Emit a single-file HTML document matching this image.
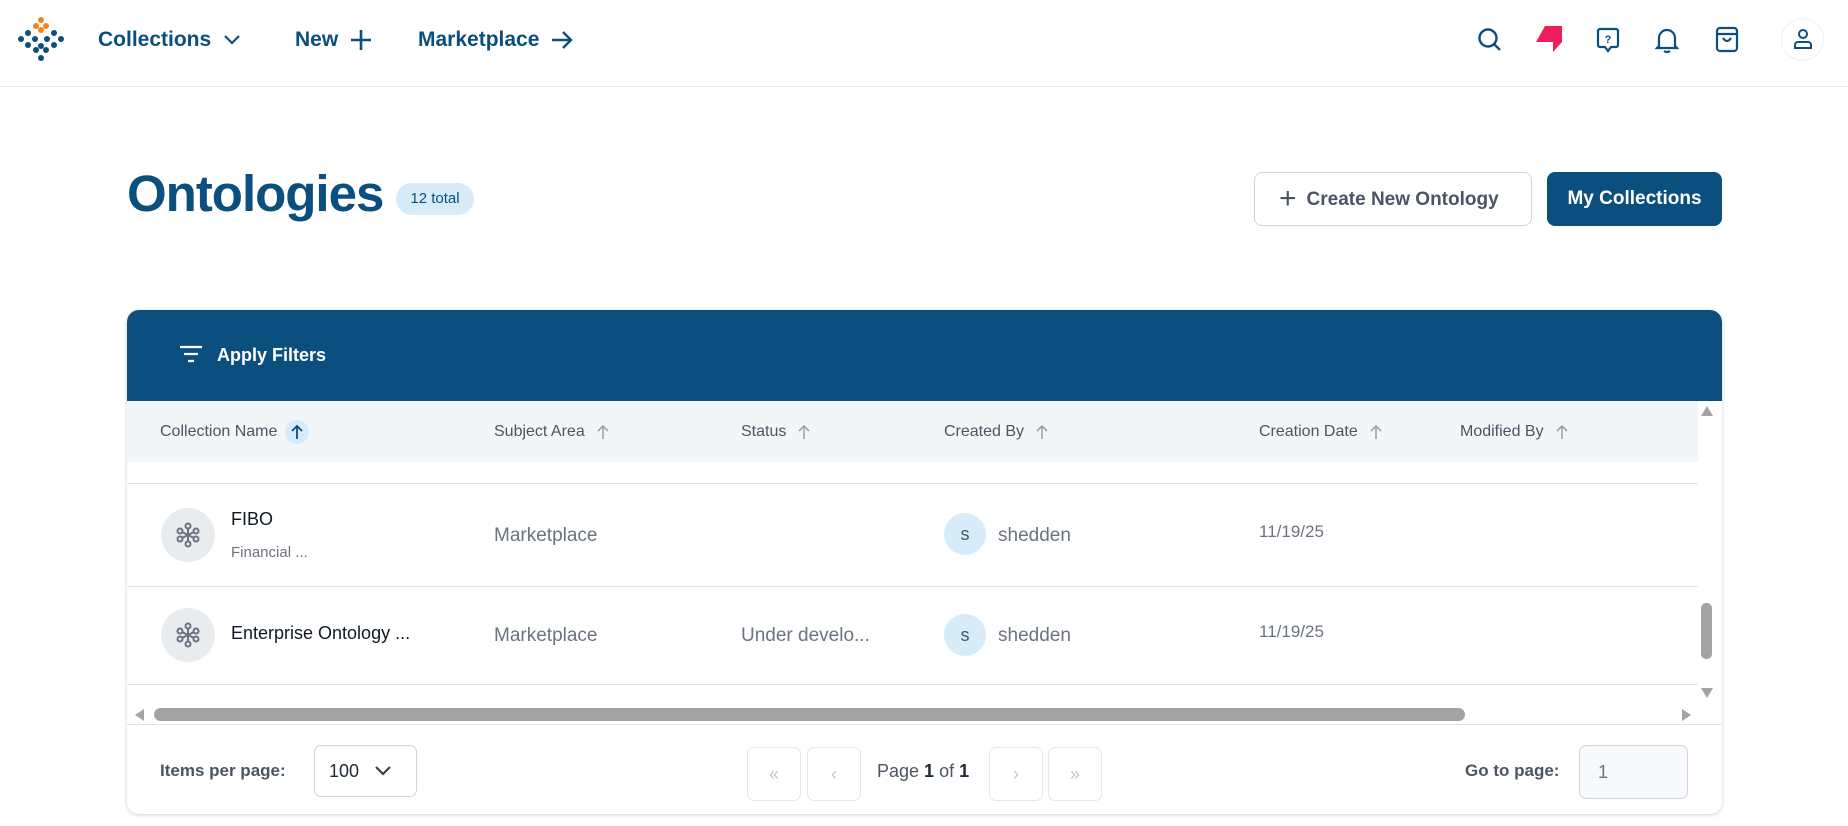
<!DOCTYPE html>
<html><head><meta charset="utf-8"><style>
*{box-sizing:border-box;margin:0;padding:0}
body{width:1848px;height:826px;background:#fff;font-family:"Liberation Sans",sans-serif;position:relative;overflow:hidden;color:#1f2937}
.a{position:absolute}
.nav{font-size:21px;font-weight:bold;color:#0b4f7e;top:28px;display:flex;align-items:center}
.nav svg{margin-left:12px}
.hd{top:0;left:0;width:1848px;height:87px;border-bottom:1px solid #e5e7eb}
.col{font-size:16px;color:#4b5563;top:423px;display:flex;align-items:center}
.col svg{margin-left:12px}
.cell{font-size:19px;color:#6b7280}
.pb{width:54px;height:54px;border:1px solid #e5e7eb;border-radius:7px;top:747px;color:#c0c6cf;font-size:18px;text-align:center;line-height:52px}
</style></head><body>
<div class="a hd"></div>
<svg class="a" style="left:18px;top:16px" width="46" height="46" viewBox="0 0 46 46">
<g fill="#f58220"><circle cx="23" cy="4" r="3"/><circle cx="18" cy="10" r="3"/><circle cx="28" cy="10" r="3"/><circle cx="23" cy="14" r="3"/></g>
<g fill="#0b4f7e"><circle cx="3" cy="23" r="3"/><circle cx="43" cy="23" r="3"/><circle cx="10" cy="17" r="3"/><circle cx="36" cy="17" r="3"/><circle cx="10" cy="29" r="3"/><circle cx="36" cy="29" r="3"/><circle cx="17" cy="23" r="3"/><circle cx="29" cy="23" r="3"/><circle cx="18" cy="34" r="3"/><circle cx="28" cy="34" r="3"/><circle cx="23" cy="30" r="3"/><circle cx="23" cy="42" r="3"/></g></svg>
<div class="a nav" style="left:98px">Collections<svg width="18" height="12" viewBox="0 0 18 12" fill="none" stroke="#0b4f7e" stroke-width="2.2"><path d="M2 2l7 7 7-7"/></svg></div>
<div class="a nav" style="left:295px">New<svg width="22" height="22" viewBox="0 0 22 22" stroke="#0b4f7e" stroke-width="2.6"><path d="M11 1v20M1 11h20"/></svg></div>
<div class="a nav" style="left:418px">Marketplace<svg width="22" height="20" viewBox="0 0 22 20" fill="none" stroke="#0b4f7e" stroke-width="2.4"><path d="M1 10h19M12 2l8 8-8 8"/></svg></div>
<svg class="a" style="left:1477px;top:27px" width="26" height="26" viewBox="0 0 26 26" fill="none" stroke="#0b4f7e" stroke-width="2.4"><circle cx="11" cy="11" r="8.5"/><path d="M17 17l6 6"/></svg>
<svg class="a" style="left:1535px;top:25px" width="30" height="30" viewBox="0 0 30 30"><path d="M10 1h17v16l-9 10v-10H1z" fill="#ee1e5a"/></svg>
<svg class="a" style="left:1596px;top:27px" width="24" height="26" viewBox="0 0 24 26" fill="none" stroke="#0b4f7e" stroke-width="2.2"><path d="M4 2h16a2 2 0 012 2v14a2 2 0 01-2 2h-5l-3 4-3-4H4a2 2 0 01-2-2V4a2 2 0 012-2z"/><text x="12" y="16" font-size="11" font-weight="bold" text-anchor="middle" fill="#0b4f7e" stroke="none" font-family="Liberation Sans">?</text></svg>
<svg class="a" style="left:1655px;top:27px" width="24" height="27" viewBox="0 0 24 27" fill="none" stroke="#0b4f7e" stroke-width="2.2"><path d="M4 19V11a8 8 0 0116 0v8l2 2H2z"/><path d="M9 24q3 2 6 0"/></svg>
<svg class="a" style="left:1715px;top:26px" width="24" height="27" viewBox="0 0 24 27" fill="none" stroke="#0b4f7e" stroke-width="2.2"><rect x="2" y="2" width="20" height="23" rx="3"/><path d="M2 8h20M8 12q4 6 8 0"/></svg>
<div class="a" style="left:1781px;top:18px;width:43px;height:43px;border:1px solid #eef0f2;border-radius:50%"></div>
<svg class="a" style="left:1792px;top:28px" width="22" height="22" viewBox="0 0 22 22" fill="none" stroke="#0b4f7e" stroke-width="2"><circle cx="11" cy="6" r="4"/><path d="M3 20v-3a3 3 0 013-3h10a3 3 0 013 3v3z"/></svg>

<div class="a" style="left:127px;top:164px;font-size:51px;font-weight:bold;color:#0b4f7e;letter-spacing:-1px">Ontologies</div>
<div class="a" style="left:396px;top:183px;width:78px;height:32px;border-radius:16px;background:#d6ecfb;color:#0b4f7e;font-size:15px;text-align:center;line-height:32px">12 total</div>
<div class="a" style="left:1254px;top:172px;width:278px;height:54px;border:1px solid #cbd5e1;border-radius:8px;color:#4b5563;font-size:19px;font-weight:bold;line-height:52px;padding-left:24px"><span style="font-size:30px;font-weight:normal;vertical-align:-3px;margin-right:10px">+</span>Create New Ontology</div>
<div class="a" style="left:1547px;top:172px;width:175px;height:54px;background:#0b4f7e;border-radius:8px;color:#fff;font-size:19px;font-weight:bold;text-align:center;line-height:54px">My Collections</div>

<div class="a" style="left:127px;top:310px;width:1595px;height:504px;border-radius:12px;box-shadow:0 1px 4px rgba(0,0,0,.18);background:#fff;overflow:hidden">
<div class="a" style="left:0;top:0;width:1595px;height:91px;background:#0b4f7e"></div>
<div class="a" style="left:0;top:91px;width:1571px;height:61px;background:#f3f6f9"></div>
<div class="a" style="left:0;top:173px;width:1571px;height:1px;background:#e2e6ea"></div>
<div class="a" style="left:0;top:276px;width:1571px;height:1px;background:#e2e6ea"></div>
<div class="a" style="left:0;top:374px;width:1571px;height:1px;background:#e2e6ea"></div>
<div class="a" style="left:0;top:414px;width:1595px;height:1px;background:#dde3ea"></div>
<div class="a" style="left:1574px;top:293px;width:11px;height:56px;background:#a3a3a3;border-radius:5px"></div>
<div class="a" style="left:1574px;top:96px;width:0;height:0;border-left:6px solid transparent;border-right:6px solid transparent;border-bottom:10px solid #a3a3a3"></div>
<div class="a" style="left:1574px;top:378px;width:0;height:0;border-left:6px solid transparent;border-right:6px solid transparent;border-top:10px solid #a3a3a3"></div>
<div class="a" style="left:27px;top:398px;width:1311px;height:13px;background:#a3a3a3;border-radius:7px"></div>
<div class="a" style="left:8px;top:399px;border-top:6px solid transparent;border-bottom:6px solid transparent;border-right:9px solid #a3a3a3"></div>
<div class="a" style="left:1555px;top:399px;border-top:6px solid transparent;border-bottom:6px solid transparent;border-left:9px solid #a3a3a3"></div>
</div>
<svg class="a" style="left:179px;top:344px" width="24" height="20" viewBox="0 0 24 20" stroke="#fff" stroke-width="2.2"><path d="M1 3h22M5 10h14M9 17h6"/></svg>
<div class="a" style="left:217px;top:345px;color:#fff;font-size:18px;font-weight:bold">Apply Filters</div>

<div class="a col" style="left:160px;top:420px">Collection Name <span style="display:inline-flex;align-items:center;justify-content:center;width:24px;height:24px;border-radius:12px;background:#d6ecfb;margin-left:8px"><svg style="margin:0" width="12" height="16" viewBox="0 0 12 16" fill="none" stroke="#0b4f7e" stroke-width="1.8"><path d="M6 15V2M1 7l5-5 5 5"/></svg></span></div>
<div class="a col" style="left:494px">Subject Area<svg width="12" height="16" viewBox="0 0 12 16" fill="none" stroke="#9ca3af" stroke-width="1.6"><path d="M6 15V2M1 7l5-5 5 5"/></svg></div>
<div class="a col" style="left:741px">Status<svg width="12" height="16" viewBox="0 0 12 16" fill="none" stroke="#9ca3af" stroke-width="1.6"><path d="M6 15V2M1 7l5-5 5 5"/></svg></div>
<div class="a col" style="left:944px">Created By<svg width="12" height="16" viewBox="0 0 12 16" fill="none" stroke="#9ca3af" stroke-width="1.6"><path d="M6 15V2M1 7l5-5 5 5"/></svg></div>
<div class="a col" style="left:1259px">Creation Date<svg width="12" height="16" viewBox="0 0 12 16" fill="none" stroke="#9ca3af" stroke-width="1.6"><path d="M6 15V2M1 7l5-5 5 5"/></svg></div>
<div class="a col" style="left:1460px">Modified By<svg width="12" height="16" viewBox="0 0 12 16" fill="none" stroke="#9ca3af" stroke-width="1.6"><path d="M6 15V2M1 7l5-5 5 5"/></svg></div>

<div class="a" style="left:161px;top:508px;width:54px;height:54px;border-radius:50%;background:#e9ecef"></div>
<svg class="a" style="left:175px;top:522px" width="26" height="26" viewBox="0 0 26 26" fill="none" stroke="#6b7280" stroke-width="2"><circle cx="13" cy="4" r="2.5"/><circle cx="13" cy="22" r="2.5"/><circle cx="5" cy="9" r="2.5"/><circle cx="21" cy="9" r="2.5"/><circle cx="5" cy="17" r="2.5"/><circle cx="21" cy="17" r="2.5"/><path d="M13 7v12M7 10l12 6M19 10L7 16"/></svg>
<div class="a" style="left:231px;top:509px;font-size:18px;color:#111827">FIBO</div>
<div class="a" style="left:231px;top:544px;font-size:15px;color:#6b7280">Financial ...</div>
<div class="a cell" style="left:494px;top:525px">Marketplace</div>
<div class="a" style="left:944px;top:513px;width:42px;height:42px;border-radius:50%;background:#d6ecfb;color:#4b5563;font-size:18px;text-align:center;line-height:42px">s</div>
<div class="a cell" style="left:998px;top:525px">shedden</div>
<div class="a cell" style="left:1259px;top:522px;font-size:17px">11/19/25</div>

<div class="a" style="left:161px;top:608px;width:54px;height:54px;border-radius:50%;background:#e9ecef"></div>
<svg class="a" style="left:175px;top:622px" width="26" height="26" viewBox="0 0 26 26" fill="none" stroke="#6b7280" stroke-width="2"><circle cx="13" cy="4" r="2.5"/><circle cx="13" cy="22" r="2.5"/><circle cx="5" cy="9" r="2.5"/><circle cx="21" cy="9" r="2.5"/><circle cx="5" cy="17" r="2.5"/><circle cx="21" cy="17" r="2.5"/><path d="M13 7v12M7 10l12 6M19 10L7 16"/></svg>
<div class="a" style="left:231px;top:623px;font-size:18px;color:#111827">Enterprise Ontology ...</div>
<div class="a cell" style="left:494px;top:625px">Marketplace</div>
<div class="a cell" style="left:741px;top:625px">Under develo...</div>
<div class="a" style="left:944px;top:614px;width:42px;height:42px;border-radius:50%;background:#d6ecfb;color:#4b5563;font-size:18px;text-align:center;line-height:42px">s</div>
<div class="a cell" style="left:998px;top:625px">shedden</div>
<div class="a cell" style="left:1259px;top:622px;font-size:17px">11/19/25</div>

<div class="a" style="left:160px;top:761px;font-size:17px;font-weight:bold;color:#4b5563">Items per page:</div>
<div class="a" style="left:314px;top:745px;width:103px;height:52px;border:1px solid #cbd5e1;border-radius:7px;font-size:18px;line-height:50px;padding-left:14px;color:#1f2937">100</div>
<svg class="a" style="left:374px;top:765px" width="18" height="12" viewBox="0 0 18 12" fill="none" stroke="#374151" stroke-width="2.2"><path d="M2 2l7 7 7-7"/></svg>
<div class="a pb" style="left:747px">&#171;</div>
<div class="a pb" style="left:807px">&#8249;</div>
<div class="a" style="left:877px;top:761px;font-size:18px;color:#4b5563">Page <b style="color:#1f2937">1</b> of <b style="color:#1f2937">1</b></div>
<div class="a pb" style="left:989px">&#8250;</div>
<div class="a pb" style="left:1048px">&#187;</div>
<div class="a" style="left:1465px;top:761px;font-size:17px;font-weight:bold;color:#4b5563">Go to page:</div>
<div class="a" style="left:1579px;top:745px;width:109px;height:54px;border:1px solid #cbd5e1;border-radius:7px;background:#f6f8fa;font-size:18px;line-height:52px;padding-left:18px;color:#6b7280">1</div>
</body></html>
